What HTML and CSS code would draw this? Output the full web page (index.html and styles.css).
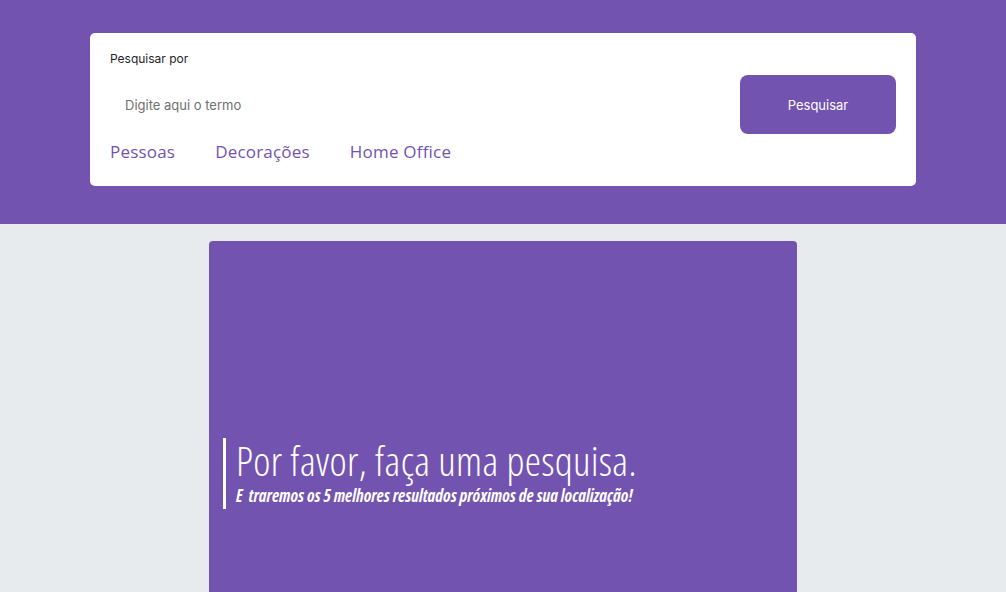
FILE: index.html
```html
<!DOCTYPE html>
<html lang="pt-BR">
<head>
<meta charset="utf-8">
<title>Pesquisa</title>
<link rel="stylesheet" href="styles.css">
</head>
<body>
<header class="header">
  <div class="search-card">
    <label class="search-label" for="termo">Pesquisar por</label>
    <div class="search-row">
      <input id="termo" class="search-input" type="text" placeholder="Digite aqui o termo">
      <button class="search-button" type="button">Pesquisar</button>
    </div>
    <nav class="tabs">
      <a class="tab" href="#">Pessoas</a>
      <a class="tab" href="#">Decorações</a>
      <a class="tab" href="#">Home Office</a>
    </nav>
  </div>
</header>
<main class="main">
  <section class="banner">
    <div class="banner-text">
      <h1 class="banner-title">Por favor, faça uma pesquisa.</h1>
      <p class="banner-sub">E&nbsp; traremos os 5 melhores resultados próximos de sua localização!</p>
    </div>
  </section>
</main>
</body>
</html>
```
FILE: styles.css
```css
* { box-sizing: border-box; }
html, body { margin: 0; padding: 0; }
body {
  background: #e8ebee;
  font-family: Inter, "Liberation Sans", sans-serif;
  overflow: hidden;
}
.header {
  background: #7353b0;
  height: 224px;
  padding-top: 33px;
}
.search-card {
  width: 826px;
  margin: 0 auto;
  background: #fff;
  border-radius: 5px;
  padding: 18px 20px 22px 20px;
}
.search-label {
  display: block;
  font-size: 12px;
  line-height: 15px;
  color: #1f2328;
}
.search-row {
  display: flex;
  align-items: center;
  margin-top: 9px;
}
.search-input {
  flex: 1;
  border: none;
  outline: none;
  height: 59px;
  padding: 0 15px;
  font-family: Inter, "Liberation Sans", sans-serif;
  font-size: 13px;
  color: #333;
  background: transparent;
}
.search-input::placeholder { color: #6f6f6f; }
.search-button {
  width: 156px;
  height: 59px;
  border: none;
  border-radius: 8px;
  background: #7353b0;
  color: #fff;
  font-family: Inter, "Liberation Sans", sans-serif;
  font-size: 13px;
}
.tabs {
  display: flex;
  gap: 40px;
  margin-top: 6px;
}
.tab {
  font-family: "Open Sans", "Noto Sans", sans-serif;
  font-size: 17px;
  letter-spacing: 0.2px;
  line-height: 24px;
  color: #7353b0;
  text-decoration: none;
}
.main {
  padding-top: 17px;
}
.banner {
  width: 588px;
  height: 420px;
  margin: 0 auto;
  background: #7353b0;
  border-radius: 4px;
  padding: 197px 0 0 14px;
}
.banner-text {
  border-left: 3px solid #fff;
  padding-left: 10px;
  height: 71px;
  color: #fff;
}
.banner-title {
  margin: 0;
  font-family: "Open Sans", "DejaVu Sans", sans-serif;
  font-weight: 300;
  font-stretch: 87.5%;
  font-size: 41px;
  line-height: 44px;
  letter-spacing: 0.3px;
}
.banner-sub {
  margin: 4px 0 0 0;
  font-family: "Open Sans", "DejaVu Sans", sans-serif;
  font-weight: 700;
  font-style: italic;
  font-stretch: 75%;
  font-size: 17px;
  line-height: 19px;
}
```
